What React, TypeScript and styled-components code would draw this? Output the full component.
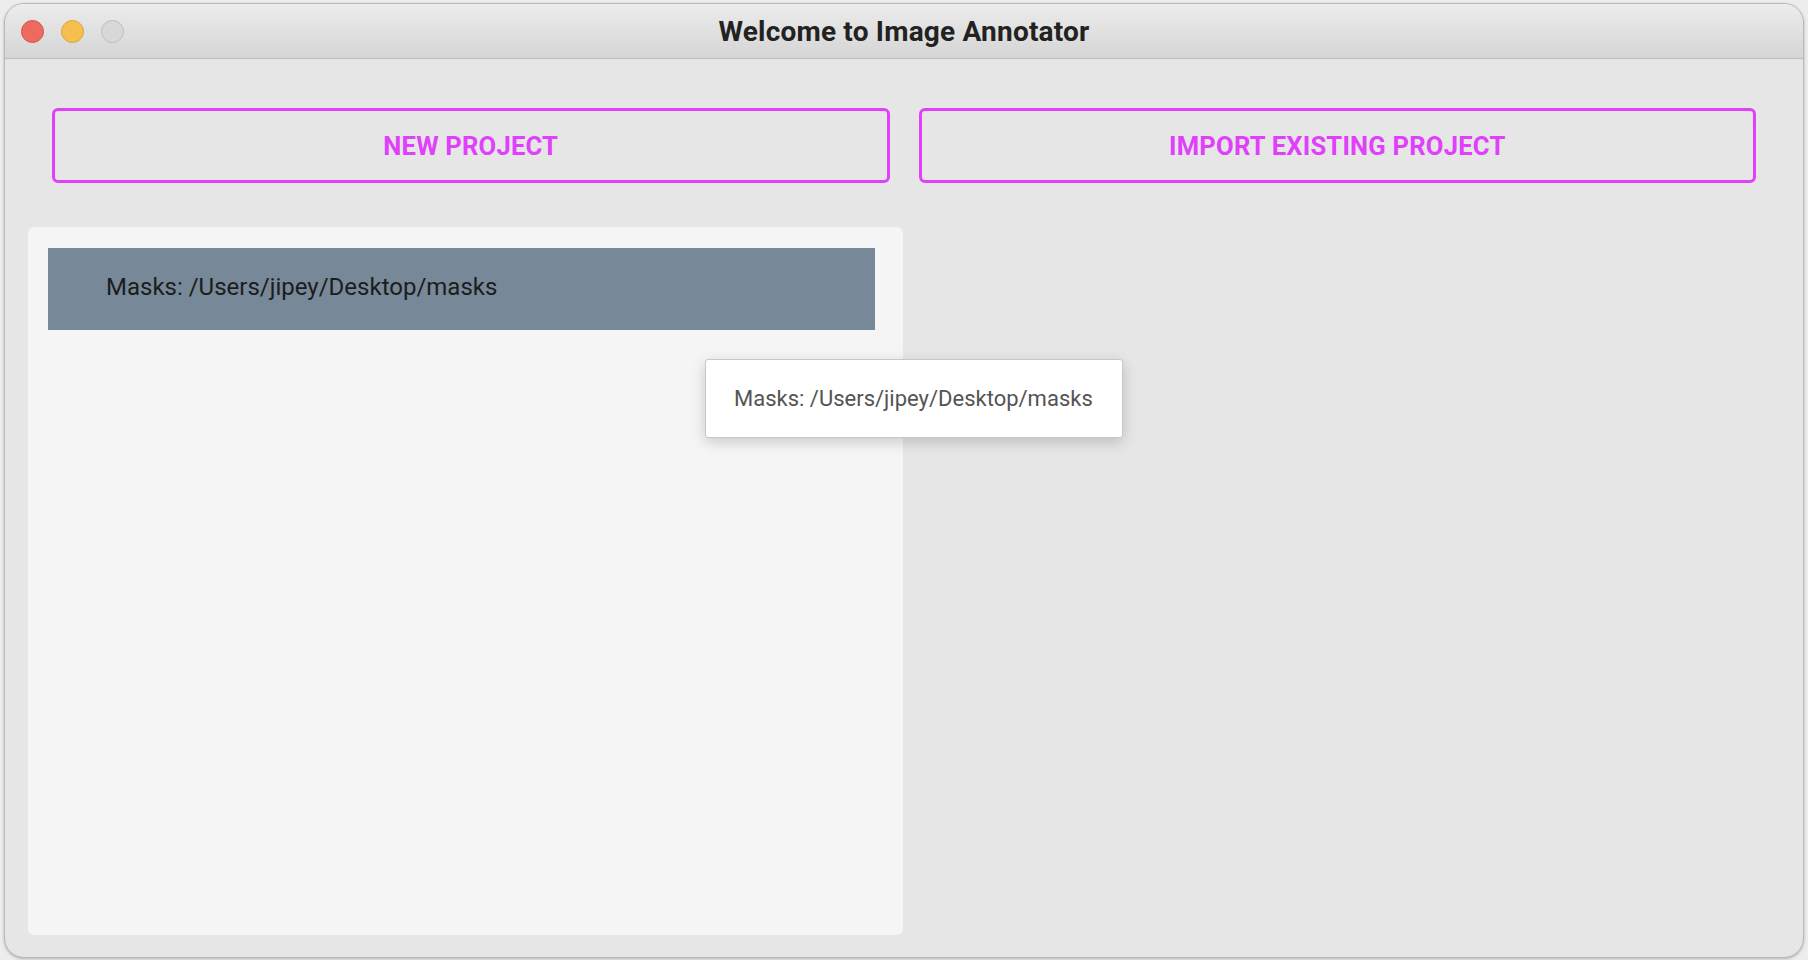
import React from "react";
import styled, { createGlobalStyle } from "styled-components";

const Global = createGlobalStyle`
  html, body { margin: 0; padding: 0; }
  body {
    background: #ededed;
    font-family: Roboto, "Noto Sans", "Liberation Sans", sans-serif;
    width: 1808px;
    height: 960px;
    overflow: hidden;
  }
`;

const Desktop = styled.div`
  width: 1808px;
  height: 960px;
  padding: 3px 4px 2px 4px;
  box-sizing: border-box;
  display: flex;
`;

const Window = styled.div`
  flex: 1;
  display: flex;
  flex-direction: column;
  border: 1px solid #b9b9b9;
  border-radius: 20px;
  overflow: hidden;
  background: #e6e6e6;
  box-shadow: 0 1px 3px rgba(0, 0, 0, 0.25);
  position: relative;
`;

const TitleBar = styled.div`
  height: 54px;
  flex: none;
  display: flex;
  align-items: center;
  justify-content: center;
  position: relative;
  background: linear-gradient(#ececec, #d5d5d5);
  border-bottom: 1px solid #bdbdbd;
`;

const Lights = styled.div`
  position: absolute;
  left: 16px;
  top: 16px;
  display: flex;
  gap: 17px;
`;

const Light = styled.span<{ $bg: string; $bd: string }>`
  width: 23px;
  height: 23px;
  border-radius: 50%;
  background: ${(p) => p.$bg};
  border: 1px solid ${(p) => p.$bd};
  box-sizing: border-box;
`;

const Title = styled.div`
  font-size: 28px;
  font-weight: 700;
  color: #222222;
  letter-spacing: 0.2px;
  margin-top: 1px;
`;

const Content = styled.div`
  flex: 1;
  display: flex;
  flex-direction: column;
  padding: 49px 24px 22px 23px;
`;

const ButtonRow = styled.div`
  display: grid;
  grid-template-columns: 1fr 1fr;
  gap: 29px;
  padding: 0 23px 0 24px;
`;

const ActionButton = styled.button`
  height: 75px;
  border: 3px solid #e040fb;
  border-radius: 6px;
  background: transparent;
  color: #e040fb;
  font-family: Roboto, "Noto Sans", sans-serif;
  font-size: 25.6px;
  font-weight: 700;
  text-transform: uppercase;
  letter-spacing: 0.2px;
  cursor: pointer;
`;

const Panel = styled.div`
  margin-top: 44px;
  width: 875px;
  flex: 1;
  background: #f5f5f5;
  border-radius: 6px;
  padding: 21px 28px 0 20px;
  box-sizing: border-box;
`;

const ListItem = styled.div`
  height: 82px;
  box-sizing: border-box;
  background: #778899;
  display: flex;
  align-items: center;
  padding-left: 58px;
  padding-bottom: 4px;
  font-size: 24px;
  color: #1c1c1c;
`;

const Tooltip = styled.div`
  position: absolute;
  left: 700px;
  top: 355px;
  width: 418px;
  height: 79px;
  box-sizing: border-box;
  background: #ffffff;
  border: 1px solid #c8c8c8;
  border-radius: 3px;
  box-shadow: 0 4px 14px rgba(0, 0, 0, 0.18);
  display: flex;
  align-items: center;
  padding-left: 28px;
  font-size: 22px;
  color: #545454;
`;

export default function App() {
  const path = "Masks: /Users/jipey/Desktop/masks";
  return (
    <>
      <Global />
      <Desktop>
        <Window>
          <TitleBar>
            <Lights>
              <Light $bg="#ee6a5f" $bd="#d2544a" />
              <Light $bg="#f5c04f" $bd="#d9a43c" />
              <Light $bg="#d8d8d8" $bd="#bdbdbd" />
            </Lights>
            <Title>Welcome to Image Annotator</Title>
          </TitleBar>
          <Content>
            <ButtonRow>
              <ActionButton>New Project</ActionButton>
              <ActionButton>Import Existing Project</ActionButton>
            </ButtonRow>
            <Panel>
              <ListItem>{path}</ListItem>
            </Panel>
          </Content>
          <Tooltip>{path}</Tooltip>
        </Window>
      </Desktop>
    </>
  );
}
